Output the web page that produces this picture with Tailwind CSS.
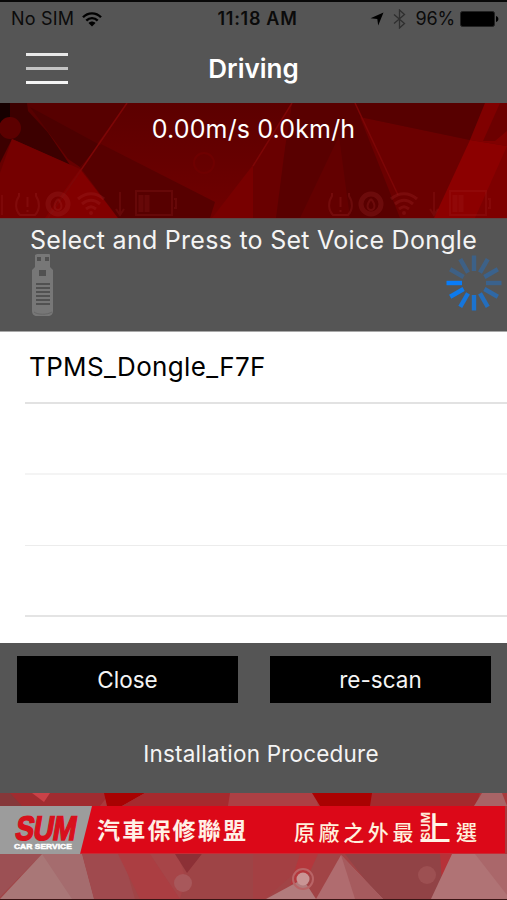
<!DOCTYPE html>
<html lang="en">
<head>
  <meta charset="UTF-8">
  <title>Driving</title>
  <script src="https://cdn.jsdelivr.net/npm/@tailwindcss/browser@4"></script>
</head>
<body class="bg-[#555] overflow-hidden font-['Inter','Noto_Sans_CJK_TC',sans-serif]">
  <div class="w-[507px] h-[900px] flex flex-col overflow-hidden whitespace-nowrap text-white">

    <!-- Status bar -->
    <div class="h-9 shrink-0 border-t-2 border-[#080808] grid grid-cols-3 items-center pl-[11px] pr-[8px] text-[18px] leading-none text-[#0b0b0b]">
      <div class="flex items-center gap-2">
        <span class="tracking-[0.2px]">No SIM</span>
        <svg class="w-5 h-[15px]" viewBox="0 0 20 15" fill="none" stroke="#000" stroke-width="2.4">
          <path d="M1 5.3C6 0 14 0 19 5.3M4.3 8.7c3.300-3.400 8.100-3.400 11.400 0"/>
          <path d="M6.500 11c2-2 5-2 7 0L10 14.500z" fill="#000" stroke="none"/>
        </svg>
      </div>
      <span class="pl-[5px] text-center font-semibold text-[18px] tracking-[0.7px]">11:18 AM</span>
      <div class="flex items-center justify-end">
        <svg class="w-[14px] h-[14px] mr-[9px]" viewBox="0 0 14 14"><path d="M13.500 .5L8.200 13.500 7.300 7 .5 6.300z" fill="#000"/></svg>
        <svg class="w-[13px] h-5 mr-[10px]" viewBox="0 0 13 20" fill="none" stroke="#2f2f2f" stroke-width="1.300"><path d="M1 5.500l10.500 9L6.500 19V1l5 4.500-10.500 9"/></svg>
        <span class="mr-[5px] tracking-[-0.2px]">96%</span>
        <svg class="w-[39px] h-4" viewBox="0 0 39 16">
          <rect x=".5" y=".5" width="34" height="15" rx="2" fill="#000" stroke="#222"/>
          <path d="M36 5c3.200 1 3.200 5 0 6z" fill="#000"/>
        </svg>
      </div>
    </div>

    <!-- Title bar -->
    <div class="h-[67px] shrink-0 grid grid-cols-3 items-center px-[26px]">
      <div class="flex flex-col gap-[11px] -mt-[3px]">
        <div class="w-[42px] h-[3px] bg-[#e8e8e8]"></div>
        <div class="w-[42px] h-[3px] bg-[#c4c4c4]"></div>
        <div class="w-[42px] h-[3px] bg-[#f4f4f4]"></div>
      </div>
      <h1 class="-mt-[2px] text-center text-[26px] font-semibold tracking-[0px]">Driving</h1>
    </div>

    <!-- Speed panel -->
    <div class="relative h-[115px] shrink-0 bg-[#680000]">
      <svg class="absolute inset-0 w-[507px] h-[115px]" viewBox="0 0 507 115">
        <defs>
          <linearGradient id="shade" x1="0" y1="0" x2="0" y2="1">
            <stop offset="0" stop-color="#5c0000"/>
            <stop offset="1" stop-color="#700000"/>
          </linearGradient>
          <g id="icons" fill="none" stroke="#aa3030" stroke-width="2">
            <path d="M3 1v3C-1 10-1 18 4 23h15c5-5 5-13 1-19V1M11.500 5v10M11.500 18v2"/>
            <circle cx="42" cy="12" r="10" stroke-width="5"/>
            <path d="M42 7c-6 7-3 11 0 11s6-4 0-11"/>
            <path d="M62 7c8-7 18-7 26 0M66 12c6-5 12-5 18 0M70 17c4-3 6-3 10 0" stroke-width="3"/>
            <circle cx="75" cy="21" r="2" fill="#aa3030" stroke="none"/>
          </g>
        </defs>
        <rect width="507" height="115" fill="url(#shade)"/>
        <path d="M0 0H28L70 62 12 36 0 60z" fill="#3c0000"/>
        <path d="M0 0H10V16L0 22z" fill="#160000"/>
        <path d="M27 0H127L80 64 28 8z" fill="#570000"/>
        <path d="M30 4L100 42 80 64 68 56z" fill="#4c0000"/>
        <path d="M12 36L80 66 48 115H0V70z" fill="#750000"/>
        <path d="M80 66L118 115H45z" fill="#820000"/>
        <path d="M80 64L101 41 215 99 210 115H118z" fill="#570000"/>
        <path d="M253 62V115H212z" fill="#780000"/>
        <path d="M253 63L292 0V115H253z" fill="#690000"/>
        <path d="M292 0H355L405 115H276L285 45z" fill="#590000"/>
        <path d="M339 33L350 115H300z" fill="#630000"/>
        <path d="M360 14L470 37 437 115H400z" fill="#6b0000"/>
        <path d="M355 0H485L470 37 360 14z" fill="#570000"/>
        <path d="M485 0H507V43L470 37z" fill="#800000"/>
        <path d="M470 37L507 43V115H434z" fill="#8c0000"/>
        <path d="M500 0H507V28L495 38H483z" fill="#6c0000"/>
        <path d="M507 43L475 115H507z" fill="#7e0000"/>
        <path d="M127 0L48 115M292 0L253 63M355 0L398 92" fill="none" stroke="#7d0606" stroke-width="1.500"/>
        <circle cx="10" cy="25" r="11" fill="#5c0000"/>
        <circle cx="204" cy="60" r="10" fill="none" stroke="#6e0000" stroke-width="2"/>
        <use href="#icons" x="16" y="89" opacity=".24"/>
        <use href="#icons" x="329" y="89" opacity=".24"/>
        <g fill="none" stroke="#aa3030" stroke-width="2" opacity=".18">
          <path d="M120 89V112M116 106l4 6 4-6M136 88h36v24h-36zM174 96h2v9h-2M2 92v20"/>
          <path d="M141 92v17M147 92v17" stroke-width="5"/>
          <path d="M434 89V112M430 106l4 6 4-6M450 88h36v24h-36zM488 96h2v9h-2"/>
          <path d="M455 92v17M461 92v17" stroke-width="5"/>
        </g>
      </svg>
      <p class="relative pt-[9px] text-center text-[25px] leading-[34px] tracking-[0.15px]">0.00m/s 0.0km/h</p>
    </div>

    <!-- Dongle picker header -->
    <div class="h-[113px] shrink-0 border-t border-[#5e4646]">
      <p class="pt-[4px] text-center text-[25px] leading-[34px] tracking-[0.27px] text-[#f4f4f4]">Select and Press to Set Voice Dongle</p>
      <div class="flex justify-between pl-[31px] pr-[5px] -mt-[4px]">
        <svg class="w-6 h-[64px]" viewBox="0 0 24 64">
          <path d="M6 1h12a1 1 0 011 1v12l3 3v41c0 3-2 5-5 5H6c-3 0-5-2-5-5V17l3-3V2z" fill="#777"/>
          <path d="M6 4h4v4H6zM14 4h4v4h-4zM8 17h7v6H8z" fill="#515151"/>
          <path d="M5 31h14M5 35h14M5 39h14M5 43h14M5 47h14M5 51h14" stroke="#515151" stroke-width="1.800"/>
          <path d="M3 59c4 3 13 3 18 0" fill="none" stroke="#666"/>
        </svg>
        <svg class="w-14 h-14 mt-[2px]" viewBox="-28 -28 56 56" stroke="#0a7cf5" stroke-width="4.400">
          <path d="M-12 0H-27.500" stroke="#087cf8"/>
          <path d="M-12 0H-27.500" transform="rotate(-30)" opacity=".95"/>
          <path d="M-12 0H-27.500" transform="rotate(-60)" opacity=".85"/>
          <path d="M-12 0H-27.500" transform="rotate(-90)" opacity=".77"/>
          <path d="M-12 0H-27.500" transform="rotate(-120)" opacity=".65"/>
          <path d="M-12 0H-27.500" transform="rotate(-150)" opacity=".5"/>
          <path d="M-12 0H-27.500" transform="rotate(180)" opacity=".35"/>
          <path d="M-12 0H-27.500" transform="rotate(150)" opacity=".35"/>
          <path d="M-12 0H-27.500" transform="rotate(120)" opacity=".32"/>
          <path d="M-12 0H-27.500" transform="rotate(90)" opacity=".32"/>
          <path d="M-12 0H-27.500" transform="rotate(60)" opacity=".3"/>
          <path d="M-12 0H-27.500" transform="rotate(30)" opacity=".3"/>
        </svg>
      </div>
    </div>

    <!-- Dongle list -->
    <div class="h-[312px] shrink-0 border-t border-[#a8a8a8] bg-white pl-[25px] text-black">
      <div class="h-[72px] border-b-2 border-[#e2e2e2] pl-[4px] text-[26px] leading-[70px] tracking-[0.35px]">TPMS_Dongle_F7F</div>
      <div class="h-[71px] border-b-2 border-[#f4f4f4]"></div>
      <div class="h-[71px] border-b border-[#ececec]"></div>
      <div class="h-[71px] border-b-2 border-[#e4e4e4]"></div>
    </div>

    <!-- Actions -->
    <div class="h-[150px] shrink-0 pl-[17px] pr-4 pt-[13px] text-[22.500px] text-[#f4f4f4]">
      <div class="grid grid-cols-2 gap-[32px]">
        <button class="h-[47px] bg-black">Close</button>
        <button class="h-[47px] bg-black">re-scan</button>
      </div>
      <p class="mt-[34px] pl-[14px] text-center leading-[34px] tracking-[0.2px]">Installation Procedure</p>
    </div>

    <!-- Sponsor banner -->
    <div class="relative h-[107px] shrink-0 bg-[#a83a3c] border-b border-[#3a1414] pt-[13px]">
      <svg class="absolute inset-0 w-[507px] h-[106px]" viewBox="0 0 507 106">
        <path d="M0 0H110L100 13H0z" fill="#a02c30"/>
        <path d="M0 0H10L22 13H0z" fill="#85383a"/>
        <path d="M32 0H50L44 9z" fill="#c94248"/>
        <path d="M104 0H145L122 13H107z" fill="#a80202"/>
        <path d="M145 0H240L235 13H122z" fill="#a62a2e"/>
        <path d="M230 0H315L318 13H228z" fill="#ac4044"/>
        <path d="M312 0H372L374 13H320z" fill="#aa0202"/>
        <path d="M372 0H480L476 13H370z" fill="#a42a2d"/>
        <path d="M482 0H502L507 13H474z" fill="#a86466"/>
        <path d="M0 61H507V106H0z" fill="#a14446"/>
        <path d="M0 61H42L0 104z" fill="#9c5054"/>
        <path d="M42 61H82L94 106H0z" fill="#a97777"/>
        <path d="M42 61L72 106H94L82 61z" fill="#a56c6e"/>
        <path d="M82 61H122L135 106H94z" fill="#a04a4e"/>
        <path d="M118 61H150L180 106H140z" fill="#ab3e42"/>
        <path d="M150 61H178L187 90 180 106z" fill="#a74548"/>
        <path d="M175 61H202L187 80z" fill="#8c3036"/>
        <path d="M202 61H253V106H180L187 82z" fill="#9e4446"/>
        <path d="M253 61H315L290 84 265 106H253z" fill="#a44043"/>
        <path d="M300 61H318L307 85 290 92z" fill="#b4373c"/>
        <path d="M345 61H452L435 106H380z" fill="#914346"/>
        <path d="M440 61H452L442 90z" fill="#b63238"/>
        <path d="M341 62L316 106H383z" fill="#b06c6f"/>
        <path d="M341 62L355 106H383z" fill="#a65b5e"/>
        <path d="M303 86L266 106H316z" fill="#b27b7c"/>
        <path d="M452 61H507V106H431z" fill="#b07375"/>
        <path d="M475 61L507 102V61z" fill="#aa676a"/>
        <circle cx="303" cy="86" r="10" fill="none" stroke="#b96466" stroke-width="2"/>
        <circle cx="303" cy="86" r="6.500" fill="#c99595"/>
        <circle cx="183" cy="90" r="9" fill="#a8585b"/>
        <circle cx="427" cy="82" r="9" fill="#9d5052"/>
      </svg>
      <div class="relative h-12 w-[505px] bg-[#dc0818] border-b border-[#c92a34] flex">
        <div class="w-[92px] h-12 bg-[#9c9c9c] [clip-path:polygon(0_0,100%_0,87%_100%,0_100%)] pl-[14px] pt-[6px] font-['Liberation_Sans',sans-serif] font-bold">
          <div class="ml-[2px] text-[34px] leading-[32px] text-[#d8101c] origin-left scale-x-[0.82] -skew-x-12 tracking-[-0.7px] [-webkit-text-stroke:1.500px_#d8101c]">SUM</div>
          <div class="text-[8px] leading-[8px] -mt-[1px] text-white origin-left scale-x-[1.06] [-webkit-text-stroke:0.500px_#fff]">CAR SERVICE</div>
        </div>
        <span class="ml-[5px] mt-[1px] text-[23px] leading-[48px] font-bold tracking-[2.200px] text-[#fff0e6]">汽車保修聯盟</span>
        <span class="absolute left-[294px] top-[4px] text-[21px] leading-[46px] font-medium tracking-[3.600px] text-[#fff0dc]">原廠之外最</span>
        <span class="absolute left-[419px] top-[2px] text-[32px] leading-[42px] font-medium text-[#fff4e6]">上</span>
        <span class="absolute left-[420px] top-[4px] h-[30px] w-[12px] text-[12px] leading-[12px] font-bold tracking-[0px] text-[#ffe8d6] [writing-mode:vertical-rl] rotate-180">SUM</span>
        <span class="absolute left-[456px] top-[4px] text-[21px] leading-[46px] font-medium text-[#fff0dc]">選</span>
      </div>
    </div>

  </div>
</body>
</html>
